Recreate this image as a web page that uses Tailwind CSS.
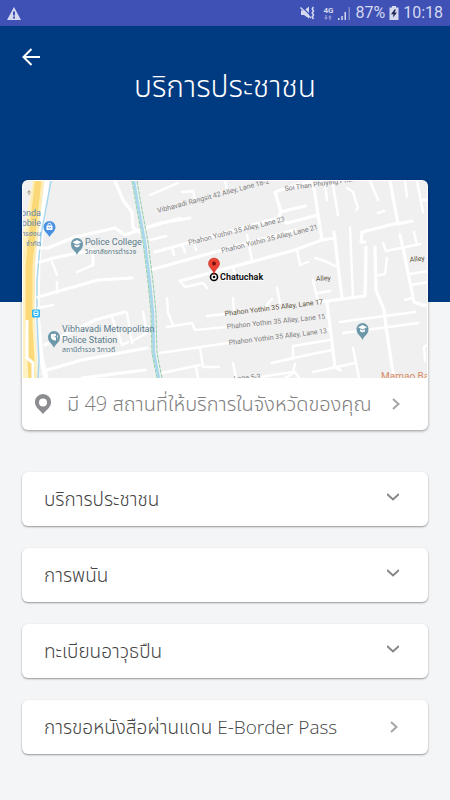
<!DOCTYPE html>
<html lang="th">
<head>
  <meta charset="UTF-8" />
  <meta name="viewport" content="width=device-width, initial-scale=1.0" />
  <title>บริการประชาชน</title>
  <script src="https://cdn.jsdelivr.net/npm/@tailwindcss/browser@4"></script>
</head>
<body class="min-h-screen bg-[#f4f5f7] font-['Open_Sans','Noto_Sans_Thai',sans-serif] font-light text-[#444]">

  <!-- Status bar -->
  <div class="flex h-[26px] items-center justify-between bg-[#3f51b5] px-[7px] font-[Roboto,sans-serif] font-normal text-[#d5d9f0]">
    <svg class="h-[13px] w-[14px]" viewBox="0 0 14 13" fill="currentColor">
      <path d="M7 0 14 13H0Z" />
      <path d="M6 4.5h2v4H6zM6 9.5h2v2H6z" fill="#3f51b5" />
    </svg>
    <div class="flex items-center">
      <svg class="mr-2 h-[14px] w-[15px]" viewBox="0 0 15 14" fill="none" stroke="currentColor">
        <path d="M1 4.500h3l5-4v12L4 9H1Z" fill="currentColor" stroke="none" />
        <path d="M1.500 .5 12 11" stroke="#3f51b5" stroke-width="1.200" />
        <path d="M.5 1.500 11 12" stroke-width="1.400" />
        <path d="M13.500 1l-1.300 2 1.300 2-1.300 2 1.300 2-1.300 2 1.300 2" stroke-width="1.500" />
      </svg>
      <div class="mr-1 flex flex-col items-center">
        <span class="text-[8px] leading-2 font-bold">4G</span>
        <svg class="h-[5px] w-[8px]" viewBox="0 0 8 5" fill="#8c96d3">
          <path d="M2 5 0 2.5h1.3V0h1.4v2.5H4ZM6 0l2 2.5H6.7V5H5.3V2.500H4Z" />
        </svg>
      </div>
      <svg class="mr-1 h-[13px] w-[14px]" viewBox="0 0 14 13" fill="currentColor">
        <path d="M1 11h1.500v2H1zM4.300 9h1.500v4H4.300zM7.500 5H9v8H7.500z" />
        <path d="M11.500 0h1.500v13h-1.500z" fill="#7d88cd" />
      </svg>
      <span class="mr-1 text-base">87%</span>
      <svg class="mr-1 h-[14px] w-[10px]" viewBox="0 0 10 14">
        <path d="M3 0h4v1.500h2.500V14h-9V1.500H3Z" fill="currentColor" />
        <path d="M5.500 3.500 2 8.300h2.500L4 11.500l4-5H5.500l1.500-3Z" fill="#20264f" />
      </svg>
      <span class="text-base">10:18</span>
    </div>
  </div>

  <!-- Header -->
  <header class="h-[276px] bg-[#003a80] px-[22px] pt-[22px] text-white">
    <button type="button" aria-label="ย้อนกลับ" class="block">
      <svg class="h-[18px] w-[18px]" viewBox="0 0 18 18" fill="none" stroke="currentColor" stroke-width="2">
        <path d="M18 9H1.500M9.500 1 1.500 9l8 8" />
      </svg>
    </button>
    <h1 class="text-center text-3xl leading-10">บริการประชาชน</h1>
  </header>

  <main class="-mt-[122px] px-[22px] pb-11">
    <!-- Map card -->
    <section class="overflow-hidden rounded-md bg-white p-px shadow-[0_1px_3px_rgba(0,0,0,0.4)]">
      <svg class="block w-full rounded-t-[5px]" viewBox="23 181 404 197" role="img" aria-label="Chatuchak" font-family="Roboto, 'Noto Sans Thai', sans-serif" font-weight="400">
        <rect x="23" y="181" width="404" height="197" fill="#f0f0f0" />

        <!-- Highway -->
        <path d="M33 181h11L34 270v40l4 68H22V240Z" fill="#fff3c4" />
        <path d="M38 181 29 265v60l3 53" fill="none" stroke="#fbd978" stroke-width="7" />
        <path d="M34 181 24 260M43 181 34 262v58" fill="none" stroke="#fdecb5" stroke-width="2" />
        <path d="M27 320v38l6 5v15" fill="none" stroke="#fff" stroke-width="3" />
        <path d="M47 181 38 262l-1 50 4 45 5 21" fill="none" stroke="#fff" stroke-width="5" />
        <path d="M51 181 41 235l-4 45v40l2 40-1 18" fill="none" stroke="#a9d7ee" stroke-width="1.500" />

        <!-- Main streets -->
        <g fill="none" stroke="#fff" stroke-width="3.200" stroke-linecap="round" stroke-linejoin="round">
          <path d="M115 181l8 19 9 12 1 16 7 4M38 248h10l27-11 40-9 10 7 15-5 20-7 30-5" />
          <path d="M155 252l123-34 3-6-6-20 20-7 25-4M278 218l9 5 31-8M280 212l25-6" />
          <path d="M150 270l72-20 73-20M180 281l115-31 27-10 13-2M40 262l18-5 35-7v15M38 297l60-17 34-2" />
          <path d="M313 181l5 34 4 25M334 232l6 50 2 16M320 302l45-6 1-49M327 302l8 65 5 3" />
          <path d="M390 181l8 43 14-3M398 223l-36 9-1 10h4M375 247l1 43 8 20 2 17 7 46" />
          <path d="M400 235l3 13 11 54 8 3h6M45 345l50-25 30-8M82 378l63-8M47 370l35-10 65-12" />
        </g>

        <!-- Side lanes -->
        <g fill="none" stroke="#fff" stroke-width="2.400" stroke-linecap="round" stroke-linejoin="round">
          <path d="M150 195l28-12M182 192l11-1 2 9M150 227l30-9M172 248l2 7M183 246l2 6M194 243l2 7M247 235l5 25M233 268l2 7M225 181l2 8" />
          <path d="M52 262l5 13M57 282v11M38 308l15-3M77 272l16-7M112 317l10 28 6-3M127 313l5 30M143 312l4 21-15 8" />
          <path d="M180 281l5 6 18-4 4 5M167 298l1 15 5 12M167 327l25-4 3 7 32-3M207 316l18-2M233 298l1 14M277 288l3 15M267 307l1-4 4-4" />
          <path d="M160 353l68-10M200 348l3 19h16M162 373l38-8M196 367l2 11M233 363l3 15M272 363l22-5M260 377l33-5 2-8M150 240l16-4" />
          <path d="M297 250l3 15 8-3M315 258l10 3 12 6M325 185l2 15M333 185l5 30M347 188l6 4 5 16-2 2M370 181l8 19M405 181l2 16M417 181l6 31M423 200h5" />
          <path d="M350 227l3 70M366 247v38M383 243l3 8 34-7M414 232l3 13M387 258l-2 16-10 2M410 274l18-3M412 285l16-3M405 300l7-2" />
          <path d="M313 280l4 18M318 293l12-2M340 322l75-10M343 333l75-10M322 316h5M322 330l7-1M313 372l42-9M353 348l6 30" />
          <path d="M285 360l8-2v-12l37-6M293 358l39-8M425 361l-1-14 4-3M378 213l6-2M285 378l10-6 4 6" />
        </g>

        <!-- Canal -->
        <path d="M134 181l6 34 5 27 5 40 3 31 1 40 5 25" fill="none" stroke="#a9d7ee" stroke-width="3" />
        <path d="M136 181l6 34 5 27 5 40 3 31 1 40 5 25" fill="none" stroke="#f0f0f0" stroke-width="1.500" />
        <path d="M137 181l6 34 5 27 5 40 3 31 1 40 5 25M132 181l6 34 5 27 5 40 3 31 1 40 5 25" fill="none" stroke="#8fceaa" stroke-width="1" stroke-dasharray="4 1" />

        <!-- Street names -->
        <g font-size="7" fill="#7d7d7d">
          <text transform="translate(158 213) rotate(-15)">Vibhavadi Rangsit 42 Alley, Lane 18-2</text>
          <text transform="translate(285 191) rotate(-8)">Soi Than Phuying Phahol</text>
          <text transform="translate(189 245) rotate(-14)">Phahon Yothin 35 Alley, Lane 23</text>
          <text transform="translate(222 253) rotate(-14)">Phahon Yothin 35 Alley, Lane 21</text>
          <text transform="translate(227 329) rotate(-6)">Phahon Yothin 35 Alley, Lane 15</text>
          <text transform="translate(229 345) rotate(-7)">Phahon Yothin 35 Alley, Lane 13</text>
          <text transform="translate(234 381) rotate(-5)">Lane 5-3</text>
        </g>
        <g font-size="7" fill="#5c5340">
          <text transform="translate(225 316) rotate(-7)">Phahon Yothin 35 Alley, Lane 17</text>
          <text transform="translate(316 281) rotate(-3)">Alley</text>
          <text transform="translate(410 262) rotate(-6)">Alley</text>
        </g>

        <!-- Places -->
        <g font-size="9" fill="#5b7b8a">
          <text x="85" y="245">Police College</text>
          <text x="85" y="254" font-size="7">วิทยาลัยการตำรวจ</text>
          <text x="62" y="332">Vibhavadi Metropolitan</text>
          <text x="62" y="343">Police Station</text>
          <text x="62" y="352" font-size="7">สถานีตำรวจ วิภาวดี</text>
        </g>
        <g font-size="9" fill="#6487b0" text-anchor="end">
          <text x="41" y="216">Honda</text>
          <text x="41" y="226">Mobile</text>
          <text x="41" y="236" font-size="7">การฮอน</text>
          <text x="41" y="246" font-size="7">จำกัด</text>
        </g>
        <text x="381" y="380" font-size="10" fill="#d98a63">Mamao Bar</text>
        <path d="M29 195v-4M27.500 192.500 29 190.500l1.500 2" stroke="#a09a80" fill="none" />

        <!-- Shop pin -->
        <path d="M49.500 237c-1-3-6-5-6-10a6 6 0 0 1 12 0c0 5-5 7-6 10Z" fill="#4a90e2" />
        <path d="M46.500 225.500h6v4.500h-6z" fill="#fff" />
        <path d="M48 225.500v-1a1.500 1.500 0 0 1 3 0v1" stroke="#fff" fill="none" />
        <path d="M48.300 227a1.200 1.200 0 0 0 2.400 0" stroke="#4a90e2" stroke-width=".8" fill="none" />

        <!-- School pins -->
        <g fill="#6c98a9">
          <path d="M77 255c-1-4-6-5-6-11a6 6 0 0 1 12 0c0 6-5 7-6 11Z" />
          <path d="M362.500 340c-1-4-6-5-6-11a6 6 0 0 1 12 0c0 6-5 7-6 11Z" />
        </g>
        <g fill="#fff">
          <path d="M77 240l4.500 2.300-4.500 2.300-4.500-2.300ZM74.500 244.300l2.500 1.300 2.500-1.300v2L77 247.500l-2.500-1.200Z" />
          <path d="M362.500 325l4.500 2.300-4.500 2.300-4.500-2.300ZM360 329.300l2.500 1.300 2.500-1.300v2l-2.500 1.200-2.500-1.200Z" />
        </g>

        <!-- Police pin -->
        <path d="M54 348c-1-4-6-5-6-11a6 6 0 0 1 12 0c0 6-5 7-6 11Z" fill="#6c98a9" />
        <circle cx="54.500" cy="335" r="1.600" fill="#fff" />
        <path d="M51 334h2v2l3 1.500v3q-3 .5-5-2.500ZM57 335l1 1-1 3Z" fill="#fff" />

        <!-- Bus stop -->
        <rect x="32" y="309.500" width="8" height="8" rx="1" fill="#29b6f6" />
        <rect x="34" y="311" width="4" height="4.500" rx=".5" fill="none" stroke="#fff" />
        <path d="M34 313.500h4" stroke="#fff" />

        <!-- Selected place -->
        <circle cx="214" cy="277" r="3.500" fill="#fff" stroke="#000" stroke-width="1.600" />
        <circle cx="214" cy="277" r="1.300" />
        <path d="M214 275c-.5-6-5.500-7-5.500-11.500a5.500 5.500 0 0 1 11 0c0 4.500-5 5.500-5.500 11.500Z" fill="#ea4335" stroke="#b7281d" stroke-width=".5" />
        <circle cx="214" cy="263.500" r="2" fill="#7a130e" />
        <text x="220" y="280" font-size="9" font-weight="bold" fill="#111" stroke="#fff" stroke-width="1.500" paint-order="stroke">Chatuchak</text>
      </svg>
      <a href="#" class="flex h-[51px] items-center pr-[27px] pl-3 text-[#7f7f7f]">
        <svg class="h-5 w-4" viewBox="0 0 16 20" fill="#8b8d90">
          <path fill-rule="evenodd" d="M8 0a8 8 0 0 1 8 8.500C16 13 11 16.500 8 20 5 16.500 0 13 0 8.500A8 8 0 0 1 8 0Zm0 4.500a4 4 0 1 0 0 8 4 4 0 0 0 0-8Z" />
        </svg>
        <span class="ml-4 flex-1 text-xl whitespace-nowrap">มี 49 สถานที่ให้บริการในจังหวัดของคุณ</span>
        <svg class="h-3 w-2" viewBox="0 0 8 12" fill="none" stroke="#a6a6a6" stroke-width="2">
          <path d="M1 1l5.500 5L1 11" />
        </svg>
      </a>
    </section>

    <!-- Services -->
    <nav class="mt-[42px] flex flex-col gap-[22px] text-[19px]">
      <button type="button" aria-expanded="false" class="flex h-[54px] items-center justify-between rounded-md bg-white pr-[29px] pl-[22px] shadow-[0_1px_2px_rgba(0,0,0,0.4)]">
        <span>บริการประชาชน</span>
        <svg class="mb-1 h-2 w-3" viewBox="0 0 12 8" fill="none" stroke="#858585" stroke-width="2"><path d="M0 1l6 5.500L12 1" /></svg>
      </button>
      <button type="button" aria-expanded="false" class="flex h-[54px] items-center justify-between rounded-md bg-white pr-[29px] pl-[22px] shadow-[0_1px_2px_rgba(0,0,0,0.4)]">
        <span>การพนัน</span>
        <svg class="mb-1 h-2 w-3" viewBox="0 0 12 8" fill="none" stroke="#858585" stroke-width="2"><path d="M0 1l6 5.500L12 1" /></svg>
      </button>
      <button type="button" aria-expanded="false" class="flex h-[54px] items-center justify-between rounded-md bg-white pr-[29px] pl-[22px] shadow-[0_1px_2px_rgba(0,0,0,0.4)]">
        <span>ทะเบียนอาวุธปืน</span>
        <svg class="mb-1 h-2 w-3" viewBox="0 0 12 8" fill="none" stroke="#858585" stroke-width="2"><path d="M0 1l6 5.500L12 1" /></svg>
      </button>
      <a href="#" class="flex h-[54px] items-center justify-between rounded-md bg-white pr-[30px] pl-[22px] shadow-[0_1px_2px_rgba(0,0,0,0.4)]">
        <span class="whitespace-nowrap">การขอหนังสือผ่านแดน E-Border Pass</span>
        <svg class="h-3 w-2" viewBox="0 0 8 12" fill="none" stroke="#a6a6a6" stroke-width="2"><path d="M1 1l5.500 5L1 11" /></svg>
      </a>
    </nav>
  </main>
</body>
</html>
